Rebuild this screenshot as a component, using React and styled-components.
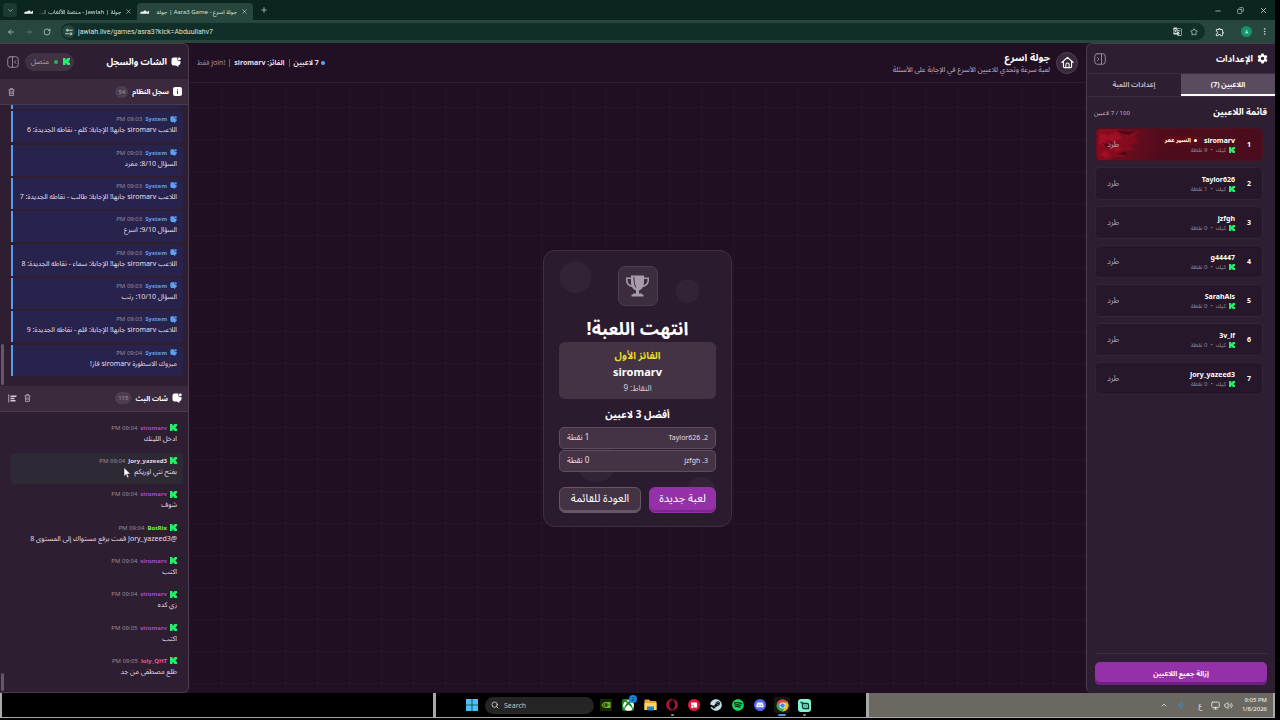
import React from 'react';
import styled, { createGlobalStyle, css } from 'styled-components';
import { FaXbox, FaSteam, FaSpotify, FaDiscord, FaOpera } from 'react-icons/fa';
import {
    ArrowLeft,
    ArrowRight,
    RotateCw,
    ChevronDown,
    ChevronUp,
    X,
    Plus,
    Minus,
    Star,
    MoreVertical,
    Copy,
    Search,
    Mic,
    Monitor,
    Volume2,
} from 'lucide-react';
import { MdGTranslate, MdOutlineExtension } from 'react-icons/md';

const systemLogs = [
    { time: '09:03 PM', text: 'اللاعب siromarv جابها! الإجابة: كلم - نقاطه الجديدة: 6' },
    { time: '09:03 PM', text: 'السؤال 8/10: مفرد' },
    { time: '09:03 PM', text: 'اللاعب siromarv جابها! الإجابة: طالب - نقاطه الجديدة: 7' },
    { time: '09:03 PM', text: 'السؤال 9/10: اسرع' },
    { time: '09:03 PM', text: 'اللاعب siromarv جابها! الإجابة: سماء - نقاطه الجديدة: 8' },
    { time: '09:03 PM', text: 'السؤال 10/10: رتب' },
    { time: '09:03 PM', text: 'اللاعب siromarv جابها! الإجابة: قلم - نقاطه الجديدة: 9' },
    { time: '09:04 PM', text: 'مبروك الاسطورة siromarv فاز!' },
];

const chatMessages = [
    { name: 'siromarv', color: '#9a4ddb', time: '09:04 PM', text: 'ادخل اللينك' },
    { name: 'Jory_yazeed3', color: '#f6d3dc', time: '09:04 PM', text: 'بفتح نتي اوريكم', hovered: true },
    { name: 'siromarv', color: '#9a4ddb', time: '09:04 PM', text: 'شوف' },
    { name: 'BotRix', color: '#7bf23c', time: '09:04 PM', text: '@Jory_yazeed3 قمت برفع مستواك إلى المستوى 8' },
    { name: 'siromarv', color: '#9a4ddb', time: '09:04 PM', text: 'اكتب' },
    { name: 'siromarv', color: '#9a4ddb', time: '09:04 PM', text: 'زي كده' },
    { name: 'siromarv', color: '#9a4ddb', time: '09:05 PM', text: 'اكتب' },
    { name: 'loly_QHT', color: '#e8578d', time: '09:05 PM', text: 'طلع مصطفى من جد' },
];

const players = [
    { name: 'siromarv', points: 9, badge: 'السير عمر' },
    { name: 'Taylor626', points: 1 },
    { name: 'jzfgh', points: 0 },
    { name: 'g44447', points: 0 },
    { name: 'SarahAls', points: 0 },
    { name: '3v_lf', points: 0 },
    { name: 'Jory_yazeed3', points: 0 },
];

const KickIcon = ({ size = 7 }) => (
    <svg width={size} height={size} viewBox="0 0 11 12" fill="#25f06a" preserveAspectRatio="none">
        <path d="M0 0h4v3h1.3V1.5h1.3V0H11v4H9.6v1.4H8.3v1.2h1.3V8H11v4H6.6v-1.5H5.3V9H4v3H0z" />
    </svg>
);

const SiteIcon = () => (
    <svg width="9" height="6" viewBox="0 0 18 12" fill="none" stroke="#fff" strokeWidth="2.6" strokeLinecap="round">
        <path d="M1.5 8c2 0 2.500-1 2.500-3v3h3.500V5v3H11a2 2 0 1 1 0-3.500c1 0 1 3.500 3 3.500h2.500V5" />
    </svg>
);

const TuneIcon = () => (
    <svg width="8" height="8" viewBox="0 0 16 16" fill="none" stroke="#d4e3dc" strokeWidth="1.8" strokeLinecap="round">
        <circle cx="4.500" cy="4.500" r="2" />
        <circle cx="11.500" cy="11.500" r="2" />
        <path d="M9 4.500h5.500M1.500 11.500H7" />
    </svg>
);

const ChatIcon = ({ size = 10, color = '#fff' }) => (
    <svg width={size} height={size} viewBox="0 0 20 20" fill={color}>
        <path d="M5 1h8a5 5 0 0 0 6 7v4a4.500 4.500 0 0 1-4 4.500L14.500 20 10 17H5a4 4 0 0 1-4-4V5a4 4 0 0 1 4-4z" />
        <circle cx="16.600" cy="3.800" r="2.900" />
    </svg>
);

const InfoIcon = () => (
    <svg width="9" height="9" viewBox="0 0 18 18">
        <rect width="18" height="18" rx="4" fill="#fff" />
        <path d="M9 4.500v2M9 8v5.500" stroke="#3b2a3d" strokeWidth="2" />
    </svg>
);

const GearIcon = () => (
    <svg width="11" height="11" viewBox="0 0 24 24" fill="#fff" fillRule="evenodd">
        <path d="M9.500 1h5l.7 3.200 2 1.100 3.100-1 2.500 4.300-2.400 2.200v2.400l2.400 2.200-2.500 4.300-3.100-1-2 1.100-.7 3.200h-5l-.7-3.200-2-1.100-3.100 1-2.500-4.300 2.400-2.200v-2.400L1.200 8.600l2.500-4.300 3.100 1 2-1.100zM12 8.200a3.800 3.800 0 1 0 0 7.600 3.800 3.800 0 0 0 0-7.600z" />
    </svg>
);

const HomeIcon = () => (
    <svg width="13" height="13" viewBox="0 0 24 24" fill="none" stroke="#fff" strokeWidth="2" strokeLinecap="round" strokeLinejoin="round">
        <path d="M1.500 12 12 2.500 22.500 12M4.500 10v9.500a2 2 0 0 0 2 2h11a2 2 0 0 0 2-2V10M9 21v-5a3 3 0 0 1 6 0v5" />
    </svg>
);

const PanelIcon = ({ flip }) => (
    <svg width="12" height="12" viewBox="0 0 24 24" fill="none" stroke="#a093a2" strokeWidth="1.8" strokeLinecap="round">
        <rect x="1.500" y="1.500" width="21" height="21" rx="5" />
        {flip ? <path d="M15 2v20M7 9l3 3-3 3" /> : <path d="M11 2v20M18 9l-3 3 3 3" />}
    </svg>
);

const TrashIcon = () => (
    <svg width="7" height="8" viewBox="0 0 14 16" fill="none" stroke="#b5abb7" strokeWidth="1.6">
        <path d="M1 3.500h12M5 3V1h4v2M2.500 4l.7 11h7.600l.7-11M5.500 6.500v6M8.500 6.500v6" />
    </svg>
);

const AlignIcon = () => (
    <svg width="9" height="9" viewBox="0 0 18 18" stroke="#d5ccd6" fill="none">
        <path d="M1.500 1v16" strokeWidth="1.500" />
        <path d="M5 4.500h12M5 9h8M5 13.500h10" strokeWidth="2.600" />
    </svg>
);

const TrophyIcon = () => (
    <svg width="25" height="22" viewBox="0 0 50 44" fill="#a79caa">
        <path d="M12 1h26v4h10v5c0 8-5 13-12 14-2 4-5 6-8 7v6h6v2h3v4H13v-4h3v-2h6v-6c-3-1-6-3-8-7C7 23 2 18 2 10V5h10zm0 7H5v2c0 5 3 9 7.600 10.500C12 17 12 12 12 8zm26 0c0 4 0 9-.6 12.500C42 19 45 15 45 10V8z" />
        <path d="M18 4c0 8 .5 15 4 21" fill="none" stroke="#3b2d3e" strokeWidth="2" />
    </svg>
);

const WindowsIcon = () => (
    <svg width="12" height="12" viewBox="0 0 24 24" fill="#45c4f3">
        <path d="M0 0h11.400v11.400H0zM12.600 0H24v11.400H12.600zM0 12.600h11.400V24H0zM12.600 12.600H24V24H12.600z" />
    </svg>
);

const NvidiaIcon = () => (
    <svg width="12" height="12" viewBox="0 0 24 24">
        <rect width="24" height="24" fill="#16260b" />
        <path d="M3 12c3-5 7-6 9-6h9v12h-9c-4 0-7-2-9-6z" fill="#74b71b" />
        <path d="M6 12c3-4 8-4 11 0-3 4-8 4-11 0z" fill="none" stroke="#16260b" strokeWidth="1.600" />
        <circle cx="12" cy="12" r="2" fill="#16260b" />
    </svg>
);

const FolderIcon = () => (
    <svg width="13" height="12" viewBox="0 0 26 24">
        <path d="M1 3q0-2 2-2h7l3 3h10q2 0 2 2v16H1z" fill="#e8a92d" />
        <path d="M1 8h24v14H1z" fill="#fbd766" />
        <path d="M6 15h14v8H6z" fill="#2680cf" />
    </svg>
);

const RecorderIcon = () => (
    <svg width="8" height="8" viewBox="0 0 16 16">
        <path d="M3 3h9q2 0 2 2v8H8V9H2V4z" fill="#fff" />
        <path d="M2 10h5v4H3z" fill="#fff" />
    </svg>
);

const ChromeIcon = () => (
    <svg width="13" height="13" viewBox="0 0 26 26">
        <circle cx="13" cy="13" r="12" fill="#34a853" />
        <path d="M2.600 7A12 12 0 0 1 23.400 7H13a6 6 0 0 0-5.200 9z" fill="#ea4335" />
        <path d="M23.400 7A12 12 0 0 1 13 25l5.200-9A6 6 0 0 0 13 7z" fill="#fbbc05" />
        <circle cx="13" cy="13" r="6" fill="#fff" />
        <circle cx="13" cy="13" r="4.600" fill="#4285f4" />
    </svg>
);

const StreamIcon = () => (
    <svg width="13" height="13" viewBox="0 0 26 26">
        <rect width="26" height="26" rx="6" fill="#80f5d2" />
        <path d="M5 7h4M9 9h9a3 3 0 0 1 3 3v7h-9a3 3 0 0 1-3-3z" fill="none" stroke="#0b3430" strokeWidth="2.600" />
        <path d="M13.500 13v2M17 13v2" stroke="#0b3430" strokeWidth="2" />
    </svg>
);

const CursorIcon = () => (
    <svg width="8" height="12" viewBox="0 0 16 24">
        <path d="M2 1v18l4-4 3 7 3-1.300L9 14h6z" fill="#fff" stroke="#1b1420" />
    </svg>
);

const CardTexture = () => (
    <TextureSvg viewBox="0 0 170 33" aria-hidden="true">
        <path d="M0 0h22l12 4 9-2-5 6 4 6-8 2 3 6-7 1-4 6-9-1-6 5H0z" fill="#8f0c20" />
        <path d="M2 4l9 3 8-4 6 6-8 4-7-2-4 7-5-3zM14 18l7-2 4 5-6 3zM2 26l6-4 5 4-4 5z" fill="#b41227" />
        <path d="M20 1l14 2 6-1-8 4-7-1zM4 14l6 2 5-3-4 7zM20 26l8-3 3 4z" fill="#3f0713" />
    </TextureSvg>
);

const App = () => {
    return (
        <Desktop>
            <GlobalStyle />
            <Browser>
                <TabStrip>
                    <TabMenu aria-label="Search tabs"><ChevronDown size={7} /></TabMenu>
                    <Tab>
                        <SiteIcon />
                        <TabTitle $faded>جولة | Jawlah - منصة الألعاب الت</TabTitle>
                        <PlainButton aria-label="Close tab"><X size={7} /></PlainButton>
                    </Tab>
                    <Tab $active>
                        <SiteIcon />
                        <TabTitle>جولة اسرع - Asra3 Game | جوله</TabTitle>
                        <PlainButton aria-label="Close tab"><X size={7} /></PlainButton>
                    </Tab>
                    <NewTab aria-label="New tab"><Plus size={8} /></NewTab>
                    <WindowControls>
                        <PlainButton aria-label="Minimize"><Minus size={8} /></PlainButton>
                        <PlainButton aria-label="Restore"><Restore size={7} /></PlainButton>
                        <PlainButton aria-label="Close"><X size={9} /></PlainButton>
                    </WindowControls>
                </TabStrip>
                <Toolbar>
                    <NavButtons>
                        <PlainButton aria-label="Back"><ArrowLeft size={8} /></PlainButton>
                        <PlainButton aria-label="Forward" $dim><ArrowRight size={8} /></PlainButton>
                        <PlainButton aria-label="Reload"><RotateCw size={8} /></PlainButton>
                    </NavButtons>
                    <AddressBar>
                        <SiteInfo aria-label="Site information"><TuneIcon /></SiteInfo>
                        <AddressInput aria-label="Address" defaultValue="jawlah.live/games/asra3?kick=Abduullahv7" />
                        <PlainButton aria-label="Translate"><MdGTranslate size={9} /></PlainButton>
                        <PlainButton aria-label="Bookmark"><Star size={8} /></PlainButton>
                    </AddressBar>
                    <Extensions>
                        <PlainButton aria-label="Extensions"><MdOutlineExtension size={10} /></PlainButton>
                        <Profile aria-label="Profile">A</Profile>
                        <PlainButton aria-label="Menu"><MoreVertical size={9} /></PlainButton>
                    </Extensions>
                </Toolbar>

                <Game dir="rtl">
                    <SettingsPanel>
                        <SettingsHeader>
                            <PanelTitle><GearIcon />الإعدادات</PanelTitle>
                            <PlainButton aria-label="إخفاء الإعدادات"><PanelIcon flip /></PlainButton>
                        </SettingsHeader>
                        <SettingsTabs>
                            <SettingsTab $active>اللاعبين (7)</SettingsTab>
                            <SettingsTab>إعدادات اللعبة</SettingsTab>
                        </SettingsTabs>
                        <PlayersHeader>
                            <PlayersTitle>قائمة اللاعبين</PlayersTitle>
                            <PlayersCount>100 / 7 لاعبين</PlayersCount>
                        </PlayersHeader>
                        <PlayerList>
                            {players.map((player, idx) => (
                                <PlayerCard key={player.name} $featured={!!player.badge}>
                                    {player.badge && <CardTexture />}
                                    <PlayerRank>{idx + 1}</PlayerRank>
                                    <PlayerInfo>
                                        <PlayerNameRow>
                                            <PlayerName>{player.name}</PlayerName>
                                            {player.badge && <PlayerBadge>{player.badge}</PlayerBadge>}
                                        </PlayerNameRow>
                                        <PlayerMeta>
                                            <KickIcon size={6} />
                                            <span>كيك</span>
                                            <span>•</span>
                                            <span>{player.points + ' نقطة'}</span>
                                        </PlayerMeta>
                                    </PlayerInfo>
                                    <KickButton>طرد</KickButton>
                                </PlayerCard>
                            ))}
                        </PlayerList>
                        <SettingsFooter>
                            <RemoveAll>إزالة جميع اللاعبين</RemoveAll>
                        </SettingsFooter>
                    </SettingsPanel>

                    <Stage>
                        <StageHeader>
                            <HomeButton aria-label="الرئيسية"><HomeIcon /></HomeButton>
                            <GameHeading>
                                <GameTitle>جولة اسرع</GameTitle>
                                <GameSubtitle>لعبة سرعة وتحدي للاعبين الأسرع في الإجابة على الأسئلة</GameSubtitle>
                            </GameHeading>
                            <GameStats>
                                <Stat $strong><Dot $color="#5aa5fb" />7 لاعبين</Stat>
                                <Stat $strong>الفائز: siromarv</Stat>
                                <Stat>!join فقط</Stat>
                            </GameStats>
                        </StageHeader>
                        <StageBody>
                            <ResultCard>
                                <Bubbles viewBox="0 0 189 277" aria-hidden="true">
                                    <circle cx="32" cy="26" r="16" />
                                    <circle cx="145" cy="40" r="12" />
                                    <circle cx="53" cy="213" r="20" />
                                    <circle cx="159" cy="242" r="14" />
                                </Bubbles>
                                <TrophyTile><TrophyIcon /></TrophyTile>
                                <ResultTitle>انتهت اللعبة!</ResultTitle>
                                <WinnerBox>
                                    <WinnerLabel>الفائز الأول</WinnerLabel>
                                    <WinnerName>siromarv</WinnerName>
                                    <WinnerPoints>النقاط: 9</WinnerPoints>
                                </WinnerBox>
                                <TopTitle>أفضل 3 لاعبين</TopTitle>
                                <TopList>
                                    {players.slice(1, 3).map((player, idx) => (
                                        <TopRow key={player.name}>
                                            <span>{idx + 2 + '. ' + player.name}</span>
                                            <TopPoints>{player.points + ' نقطة'}</TopPoints>
                                        </TopRow>
                                    ))}
                                </TopList>
                                <ResultActions>
                                    <ActionButton $primary>لعبة جديدة</ActionButton>
                                    <ActionButton>العودة للقائمة</ActionButton>
                                </ResultActions>
                            </ResultCard>
                        </StageBody>
                    </Stage>

                    <ChatPanel>
                        <ChatHeader>
                            <PanelTitle><ChatIcon />الشات والسجل</PanelTitle>
                            <Connection>
                                <KickIcon />
                                <Dot $color="#2fae5b" />
                                متصل
                            </Connection>
                            <PlainButton aria-label="إخفاء الشات"><PanelIcon /></PlainButton>
                        </ChatHeader>
                        <Section>
                            <SectionHeader>
                                <InfoIcon />
                                <SectionTitle>سجل النظام</SectionTitle>
                                <Count>54</Count>
                                <SectionTools>
                                    <PlainButton aria-label="مسح السجل"><TrashIcon /></PlainButton>
                                </SectionTools>
                            </SectionHeader>
                            <SystemList>
                                <SystemTail />
                                {systemLogs.map((log, idx) => (
                                    <Message key={idx} $system>
                                        <MessageHead>
                                            <ChatIcon size={7} color="#5f9ff0" />
                                            <Author $color="#5f9ff0">System</Author>
                                            <Time>{log.time}</Time>
                                        </MessageHead>
                                        <MessageText>{log.text}</MessageText>
                                    </Message>
                                ))}
                                <ScrollThumb $size={41} />
                            </SystemList>
                        </Section>
                        <Section>
                            <SectionHeader>
                                <ChatIcon />
                                <SectionTitle>شات البث</SectionTitle>
                                <Count>115</Count>
                                <SectionTools>
                                    <PlainButton aria-label="مسح الشات"><TrashIcon /></PlainButton>
                                    <PlainButton aria-label="محاذاة"><AlignIcon /></PlainButton>
                                </SectionTools>
                            </SectionHeader>
                            <StreamList>
                                {chatMessages.map((msg, idx) => (
                                    <Message key={idx} $hovered={msg.hovered}>
                                        <MessageHead>
                                            <KickIcon />
                                            <Author $color={msg.color}>{msg.name}</Author>
                                            <Time>{msg.time}</Time>
                                        </MessageHead>
                                        <MessageText>{msg.text}</MessageText>
                                        {msg.hovered && <Pointer><CursorIcon /></Pointer>}
                                    </Message>
                                ))}
                                <ScrollThumb $size={18} />
                            </StreamList>
                        </Section>
                    </ChatPanel>
                </Game>

                <Taskbar>
                    <TaskbarLeft />
                    <TaskbarApps>
                        <AppButton aria-label="Start"><WindowsIcon /></AppButton>
                        <TaskSearch>
                            <Search size={8} />
                            <TaskSearchInput aria-label="Search" placeholder="Search" />
                        </TaskSearch>
                        <AppButton aria-label="NVIDIA"><NvidiaIcon /></AppButton>
                        <AppButton aria-label="Xbox" $back="#1c8421">
                            <FaXbox size={11} color="#fff" />
                            <AppBadge>2</AppBadge>
                        </AppButton>
                        <AppButton aria-label="Explorer"><FolderIcon /></AppButton>
                        <AppButton aria-label="Opera" $open><FaOpera size={12} color="#b3123f" /></AppButton>
                        <AppButton aria-label="Recorder" $back="#e3173e" $round><RecorderIcon /></AppButton>
                        <AppButton aria-label="Steam"><FaSteam size={12} color="#c5dcec" /></AppButton>
                        <AppButton aria-label="Spotify"><FaSpotify size={12} color="#1ed760" /></AppButton>
                        <AppButton aria-label="Discord" $back="#5865f2" $round><FaDiscord size={8} color="#fff" /></AppButton>
                        <AppButton aria-label="Chrome" $open $current><ChromeIcon /></AppButton>
                        <AppButton aria-label="Streamlabs" $open><StreamIcon /></AppButton>
                    </TaskbarApps>
                    <Tray>
                        <ChevronUp size={8} />
                        <Mic size={8} color="#3a8fc7" />
                        <TrayLanguage>ع</TrayLanguage>
                        <TrayGroup>
                            <Monitor size={9} />
                            <Volume2 size={9} />
                        </TrayGroup>
                        <Clock>
                            <span>9:05 PM</span>
                            <span>1/8/2026</span>
                        </Clock>
                    </Tray>
                </Taskbar>
            </Browser>
        </Desktop>
    );
};

const GlobalStyle = createGlobalStyle`
    * {
        box-sizing: border-box;
    }
    body {
        margin: 0;
        background: #000;
        font-family: "Noto Sans", "Noto Sans Arabic", "DejaVu Sans", sans-serif;
        font-size: 7px;
        color: #fff;
        white-space: nowrap;
    }
    button, input {
        font: inherit;
        color: inherit;
        padding: 0;
        border: none;
        background: none;
    }
    h1, h2, h3, p, ol, ul {
        margin: 0;
        padding: 0;
        list-style: none;
    }
    svg {
        display: block;
        flex: none;
    }
`;

const Desktop = styled.div`
    height: 100vh;
    padding: 0 5px 2px 0;
    background: #000;
`;

const Browser = styled.div`
    display: flex;
    flex-direction: column;
    height: 100%;
    overflow: hidden;
`;

/* browser chrome */

const PlainButton = styled.button`
    display: flex;
    align-items: center;
    justify-content: center;
    opacity: ${({ $dim }) => ($dim ? 0.4 : 1)};
`;

const TabStrip = styled.div`
    display: flex;
    align-items: flex-end;
    height: 20px;
    flex: none;
    background: #0b2620;
    color: #d4e3dc;
`;

const TabMenu = styled(PlainButton)`
    width: 14px;
    height: 14px;
    margin: 0 4px 3px 3px;
    border-radius: 4px;
    background: #1c3a32;
`;

const Tab = styled.div`
    display: flex;
    align-items: center;
    gap: 4px;
    width: 116px;
    height: 17px;
    padding: 0 5px 0 3px;
    border-radius: 4px 4px 0 0;
    background: ${({ $active }) => ($active ? '#27463e' : 'transparent')};
`;

const TabTitle = styled.span`
    flex: 1;
    direction: rtl;
    font-size: 6px;
    line-height: 12px;
    mask-image: ${({ $faded }) => ($faded ? 'linear-gradient(to right, transparent, #000 16px)' : 'none')};
`;

const NewTab = styled(PlainButton)`
    margin: 0 0 6px 7px;
`;

const Restore = styled(Copy)`
    transform: scaleX(-1);
`;

const WindowControls = styled.div`
    display: flex;
    gap: 15px;
    margin: 0 7px 5px auto;
`;

const Toolbar = styled.div`
    display: flex;
    align-items: center;
    height: 23px;
    flex: none;
    background: #27463e;
    color: #d4e3dc;
`;

const NavButtons = styled.div`
    display: flex;
    gap: 10px;
    padding: 0 10px 0 7px;
`;

const AddressBar = styled.div`
    display: flex;
    flex: 1;
    align-items: center;
    gap: 8px;
    height: 17px;
    padding: 0 7px 0 1px;
    border-radius: 9px;
    background: #122e28;
`;

const SiteInfo = styled(PlainButton)`
    width: 13px;
    height: 13px;
    border-radius: 50%;
    background: #27463e;
`;

const AddressInput = styled.input`
    flex: 1;
    min-width: 0;
    height: 13px;
    margin-left: -5px;
    outline: none;
    font-family: Roboto, sans-serif;
`;

const Extensions = styled.div`
    display: flex;
    align-items: center;
    gap: 8px;
    padding: 0 6px 0 10px;
`;

const Profile = styled.button`
    width: 11px;
    height: 11px;
    margin-left: 8px;
    border-radius: 50%;
    background: #14936b;
    color: #fff;
    font-size: 5px;
`;

/* game page */

const Game = styled.div`
    display: flex;
    flex: 1;
    min-height: 0;
    background: #200f22;
`;

const sidePanel = css`
    display: flex;
    flex-direction: column;
    flex: none;
    background: #2e1e31;
`;

const SettingsPanel = styled.aside`
    ${sidePanel}
    width: 189px;
    border: solid #4a3a4c;
    border-width: 1px 0 0 1px;
    border-radius: 6px 0 0 6px;
`;

const ChatPanel = styled.aside`
    ${sidePanel}
    width: 189px;
    border: solid #4a3a4c;
    border-width: 1px 1px 1px 0;
    border-radius: 0 6px 6px 0;
`;

const PanelTitle = styled.h2`
    display: flex;
    align-items: center;
    gap: 4px;
    font-size: 9px;
    line-height: 16px;
    font-weight: bold;
`;

const SettingsHeader = styled.div`
    display: flex;
    align-items: center;
    justify-content: space-between;
    height: 29px;
    padding: 0 7px;
`;

const SettingsTabs = styled.div`
    display: flex;
    height: 24px;
    border: solid #3d2d40;
    border-width: 1px 0;
`;

const SettingsTab = styled.button`
    flex: 1;
    font-weight: bold;
    color: ${({ $active }) => ($active ? '#fff' : '#bdb2bf')};
    background: ${({ $active }) => ($active ? '#5a4b5e' : 'transparent')};
    border-bottom: 2px solid ${({ $active }) => ($active ? '#fff' : 'transparent')};
`;

const PlayersHeader = styled.div`
    display: flex;
    align-items: center;
    justify-content: space-between;
    height: 31px;
    padding: 0 8px 0 7px;
`;

const PlayersTitle = styled.h3`
    font-size: 9px;
    font-weight: bold;
`;

const PlayersCount = styled.span`
    font-size: 6px;
    color: #c3b9c5;
`;

const PlayerList = styled.ol`
    display: flex;
    flex: 1;
    flex-direction: column;
    gap: 6px;
    min-height: 0;
    padding: 0 12px 0 8px;
    overflow: hidden;
`;

const PlayerCard = styled.li`
    position: relative;
    display: flex;
    align-items: center;
    height: 33px;
    flex: none;
    padding: 0 11px;
    border: 1px solid ${({ $featured }) => ($featured ? '#4f1220' : '#33243a')};
    border-radius: 5px;
    background: ${({ $featured }) => ($featured
        ? 'radial-gradient(circle at 14px 10px, #7d0d20 0, transparent 54px), linear-gradient(to left, #4a0d1d, #500b1b)'
        : '#26172a')};
    overflow: hidden;
`;

const TextureSvg = styled.svg`
    position: absolute;
    left: 0;
    top: 0;
    width: 168px;
    height: 32px;
    opacity: 0.7;
`;

const PlayerRank = styled.span`
    width: 16px;
    font-weight: bold;
`;

const PlayerInfo = styled.div`
    flex: 1;
`;

const PlayerNameRow = styled.div`
    display: flex;
    align-items: center;
    gap: 4px;
    line-height: 11px;
`;

const PlayerName = styled.span`
    font-weight: bold;
`;

const PlayerBadge = styled.span`
    display: flex;
    align-items: center;
    gap: 3px;
    padding: 0 3px;
    border-radius: 5px;
    background: #5f0a19;
    font-size: 6px;
    line-height: 9px;
    font-weight: bold;

    &::before {
        content: "";
        width: 3px;
        height: 3px;
        border-radius: 50%;
        background: #fff;
    }
`;

const PlayerMeta = styled.div`
    display: flex;
    align-items: center;
    gap: 3px;
    font-size: 6px;
    line-height: 9px;
    color: #968a99;
`;

const KickButton = styled.button`
    position: relative;
    font-size: 8px;
    color: #b3a8b5;
`;

const SettingsFooter = styled.div`
    margin: 0 8px;
    padding: 8px 0;
    border-top: 1px solid #3d2d40;
`;

const RemoveAll = styled.button`
    width: 100%;
    height: 23px;
    border-radius: 5px;
    background: #9531a8;
    box-shadow: inset 0 -3px 0 #701f84;
    font-weight: bold;
    line-height: 18px;
`;

const Stage = styled.main`
    display: flex;
    flex: 1;
    flex-direction: column;
    min-width: 0;
    background:
        linear-gradient(rgba(255, 230, 255, 0.025) 1px, transparent 1px) 0 0 / 32px 32px,
        linear-gradient(to right, rgba(255, 230, 255, 0.025) 1px, transparent 1px) 0 0 / 32px 32px;
`;

const StageHeader = styled.header`
    display: flex;
    align-items: center;
    gap: 6px;
    height: 40px;
    flex: none;
    padding: 0 8px;
    background: #211024;
    border-bottom: 1px solid #2d1d30;
`;

const HomeButton = styled.button`
    display: flex;
    align-items: center;
    justify-content: center;
    width: 22px;
    height: 22px;
    border: 1px solid #4c3d4f;
    border-radius: 50%;
    background: #382a3b;
`;

const GameHeading = styled.div`
    flex: 1;
`;

const GameTitle = styled.h1`
    font-size: 10px;
    line-height: 13px;
    font-weight: bold;
`;

const GameSubtitle = styled.p`
    line-height: 11px;
    font-weight: 500;
    color: #a99cac;
`;

const GameStats = styled.div`
    display: flex;
`;

const Stat = styled.span`
    display: flex;
    align-items: center;
    gap: 2px;
    line-height: 8px;
    font-weight: ${({ $strong }) => ($strong ? 'bold' : 'normal')};
    color: ${({ $strong }) => ($strong ? '#e6dfe8' : '#a295a5')};

    & + & {
        margin-right: 4px;
        padding-right: 4px;
        border-right: 1px solid #6b5d6e;
    }

    &:first-child {
        margin-right: 6px;
    }
`;

const Dot = styled.i`
    width: 4px;
    height: 4px;
    border-radius: 50%;
    background: ${({ $color }) => $color};
`;

const StageBody = styled.div`
    display: flex;
    flex: 1;
    align-items: center;
    justify-content: center;
`;

const ResultCard = styled.section`
    position: relative;
    display: flex;
    flex-direction: column;
    align-items: center;
    width: 189px;
    padding: 15px 15px 13px;
    border: 1px solid #3e2f41;
    border-radius: 12px;
    background: #2b1b2f;
    overflow: hidden;

    > * {
        position: relative;
    }
`;

const Bubbles = styled.svg`
    && {
        position: absolute;
    }
    inset: 0;
    width: 100%;
    height: 100%;
    fill: rgba(255, 255, 255, 0.04);
`;

const TrophyTile = styled.div`
    display: flex;
    align-items: center;
    justify-content: center;
    width: 40px;
    height: 40px;
    border: 1px solid #4c3d4f;
    border-radius: 7px;
    background: #3b2d3e;
`;

const ResultTitle = styled.h2`
    margin-top: 8px;
    font-size: 18px;
    line-height: 28px;
    font-weight: bold;
`;

const WinnerBox = styled.div`
    width: 100%;
    padding: 5px 0;
    border-radius: 6px;
    background: #433345;
    text-align: center;
`;

const WinnerLabel = styled.p`
    font-size: 10px;
    line-height: 16px;
    font-weight: bold;
    color: #eadb25;
`;

const WinnerName = styled.p`
    font-size: 11px;
    line-height: 18px;
    font-weight: bold;
`;

const WinnerPoints = styled.p`
    font-size: 8px;
    line-height: 13px;
    color: #d9d0db;
`;

const TopTitle = styled.h3`
    margin: 7px 0 5px;
    font-size: 10px;
    line-height: 16px;
    font-weight: bold;
`;

const TopList = styled.ol`
    display: flex;
    flex-direction: column;
    gap: 1px;
    width: 100%;
`;

const TopRow = styled.li`
    display: flex;
    align-items: center;
    justify-content: space-between;
    height: 22px;
    padding: 0 7px;
    border: 1px solid #5d4e60;
    border-radius: 5px;
    background: #433345;
    color: #e6dfe8;
`;

const TopPoints = styled.span`
    font-size: 8px;
`;

const ResultActions = styled.div`
    display: flex;
    gap: 8px;
    width: 100%;
    margin-top: 15px;
`;

const ActionButton = styled.button`
    flex: ${({ $primary }) => ($primary ? '0 0 67px' : '1')};
    height: 26px;
    padding-bottom: 3px;
    border: 1px solid ${({ $primary }) => ($primary ? '#9531a8' : '#655768')};
    border-radius: 6px;
    background: ${({ $primary }) => ($primary ? '#9531a8' : '#433345')};
    box-shadow: inset 0 -2px 0 ${({ $primary }) => ($primary ? '#7d258f' : '#655768')};
    font-size: 11px;
    line-height: 16px;
`;

/* chat */

const ChatHeader = styled.div`
    display: flex;
    align-items: center;
    height: 35px;
    flex: none;
    padding: 0 7px;
`;

const Connection = styled.div`
    display: flex;
    align-items: center;
    gap: 5px;
    height: 18px;
    margin: 0 auto 0 6px;
    padding: 0 4px 0 6px;
    border-radius: 9px;
    background: #413243;
    color: #b3a8b5;
`;

const Section = styled.section`
    display: flex;
    flex: 1;
    flex-direction: column;
    min-height: 0;
`;

const SectionHeader = styled.div`
    display: flex;
    align-items: center;
    gap: 4px;
    height: 26px;
    flex: none;
    padding: 0 6px 0 8px;
    background: #3b2a3d;
    border-bottom: 1px solid #4a3a4c;
`;

const SectionTitle = styled.h3`
    font-size: 7px;
    font-weight: bold;
`;

const Count = styled.span`
    min-width: 13px;
    padding: 0 3px;
    border-radius: 6px;
    background: #4c3d4f;
    color: #a295a5;
    font-size: 6px;
    line-height: 12px;
`;

const SectionTools = styled.div`
    display: flex;
    gap: 7px;
    margin-right: auto;
`;

const messageList = css`
    position: relative;
    display: flex;
    flex: 1;
    flex-direction: column;
    justify-content: space-between;
    min-height: 0;
`;

const SystemList = styled.div`
    ${messageList}
    padding: 0 5px 10px 11px;
`;

const StreamList = styled.div`
    ${messageList}
    padding: 8px 5px 8px 11px;
`;

const Message = styled.article`
    position: relative;
    height: 31px;
    flex: none;
    padding: 3px 6px 5px;
    border-left: ${({ $system }) => ($system ? '2px solid #5c9bec' : 'none')};
    border-radius: ${({ $system }) => ($system ? '0 4px 4px 0' : '4px')};
    background: ${({ $system, $hovered }) => ($system ? '#28234c' : $hovered ? '#2d2a35' : 'transparent')};
`;

/* end of the entry scrolled out above the list */
const SystemTail = styled.div`
    height: 4px;
    border-left: 2px solid #5c9bec;
    border-radius: 0 0 4px 0;
    background: #28234c;
`;

const MessageHead = styled.div`
    display: flex;
    align-items: center;
    gap: 3px;
    line-height: 10px;
    font-size: 6px;
`;

const Author = styled.span`
    font-weight: bold;
    color: ${({ $color }) => $color};
`;

const Time = styled.time`
    color: #958a99;
`;

const MessageText = styled.p`
    line-height: 12px;
    color: #e6dfeb;
`;

const ScrollThumb = styled.div`
    position: absolute;
    left: 1px;
    bottom: 1px;
    width: 3px;
    height: ${({ $size }) => $size}px;
    border-radius: 2px;
    background: #655768;
`;

const Pointer = styled.div`
    position: absolute;
    left: 112px;
    top: 14px;
`;

/* windows taskbar */

const Taskbar = styled.footer`
    display: grid;
    grid-template-columns: 1fr 1fr 409px;
    height: 25px;
    flex: none;
    border-bottom: 1px solid #a9a9a9;
    background: #000;
`;

const TaskbarLeft = styled.div`
    border-left: 2px solid #a9a9a9;
`;

const TaskbarApps = styled.div`
    display: flex;
    align-items: center;
    gap: 6px;
    padding-left: 28px;
    border-left: 3px solid #a9a9a9;
`;

const AppButton = styled.button`
    position: relative;
    display: flex;
    align-items: center;
    justify-content: center;
    width: ${({ $back }) => ($back ? '12px' : '16px')};
    height: ${({ $back }) => ($back ? '12px' : '16px')};
    margin: 0 ${({ $back }) => ($back ? '2px' : '0')};
    border-radius: ${({ $round }) => ($round ? '50%' : '2px')};
    background: ${({ $back, $current }) => $back || ($current ? '#161616' : 'transparent')};

    &::after {
        content: "";
        display: ${({ $open }) => ($open ? 'block' : 'none')};
        position: absolute;
        bottom: -3px;
        width: ${({ $current }) => ($current ? '8px' : '3px')};
        height: 2px;
        border-radius: 1px;
        background: ${({ $current }) => ($current ? '#4b94d8' : '#8a8a8a')};
    }
`;

const AppBadge = styled.span`
    position: absolute;
    top: -4px;
    right: -3px;
    width: 8px;
    height: 8px;
    border-radius: 50%;
    background: #1583dd;
    color: #0d2b48;
    font-size: 5px;
    line-height: 8px;
    text-align: center;
`;

const TaskSearch = styled.label`
    display: flex;
    align-items: center;
    gap: 5px;
    width: 109px;
    height: 17px;
    margin: 0 -2px 0 -1px;
    padding: 0 6px;
    border-radius: 9px;
    background: #252525;
`;

const TaskSearchInput = styled.input`
    flex: 1;
    min-width: 0;
    outline: none;

    &::placeholder {
        color: #c2c2c2;
        opacity: 1;
    }
`;

const Tray = styled.div`
    display: flex;
    align-items: center;
    justify-content: flex-end;
    gap: 9px;
    padding-right: 6px;
    border: solid #a9a9a9;
    border-width: 0 2px 0 3px;
    background: #6b6862;
    color: #f6f5f3;
`;

const TrayLanguage = styled.span`
    padding-left: 4px;
`;

const TrayGroup = styled.div`
    display: flex;
    gap: 4px;
`;

const Clock = styled.div`
    display: flex;
    flex-direction: column;
    align-items: flex-end;
    line-height: 9px;
    font-size: 6px;
`;

export default App;
